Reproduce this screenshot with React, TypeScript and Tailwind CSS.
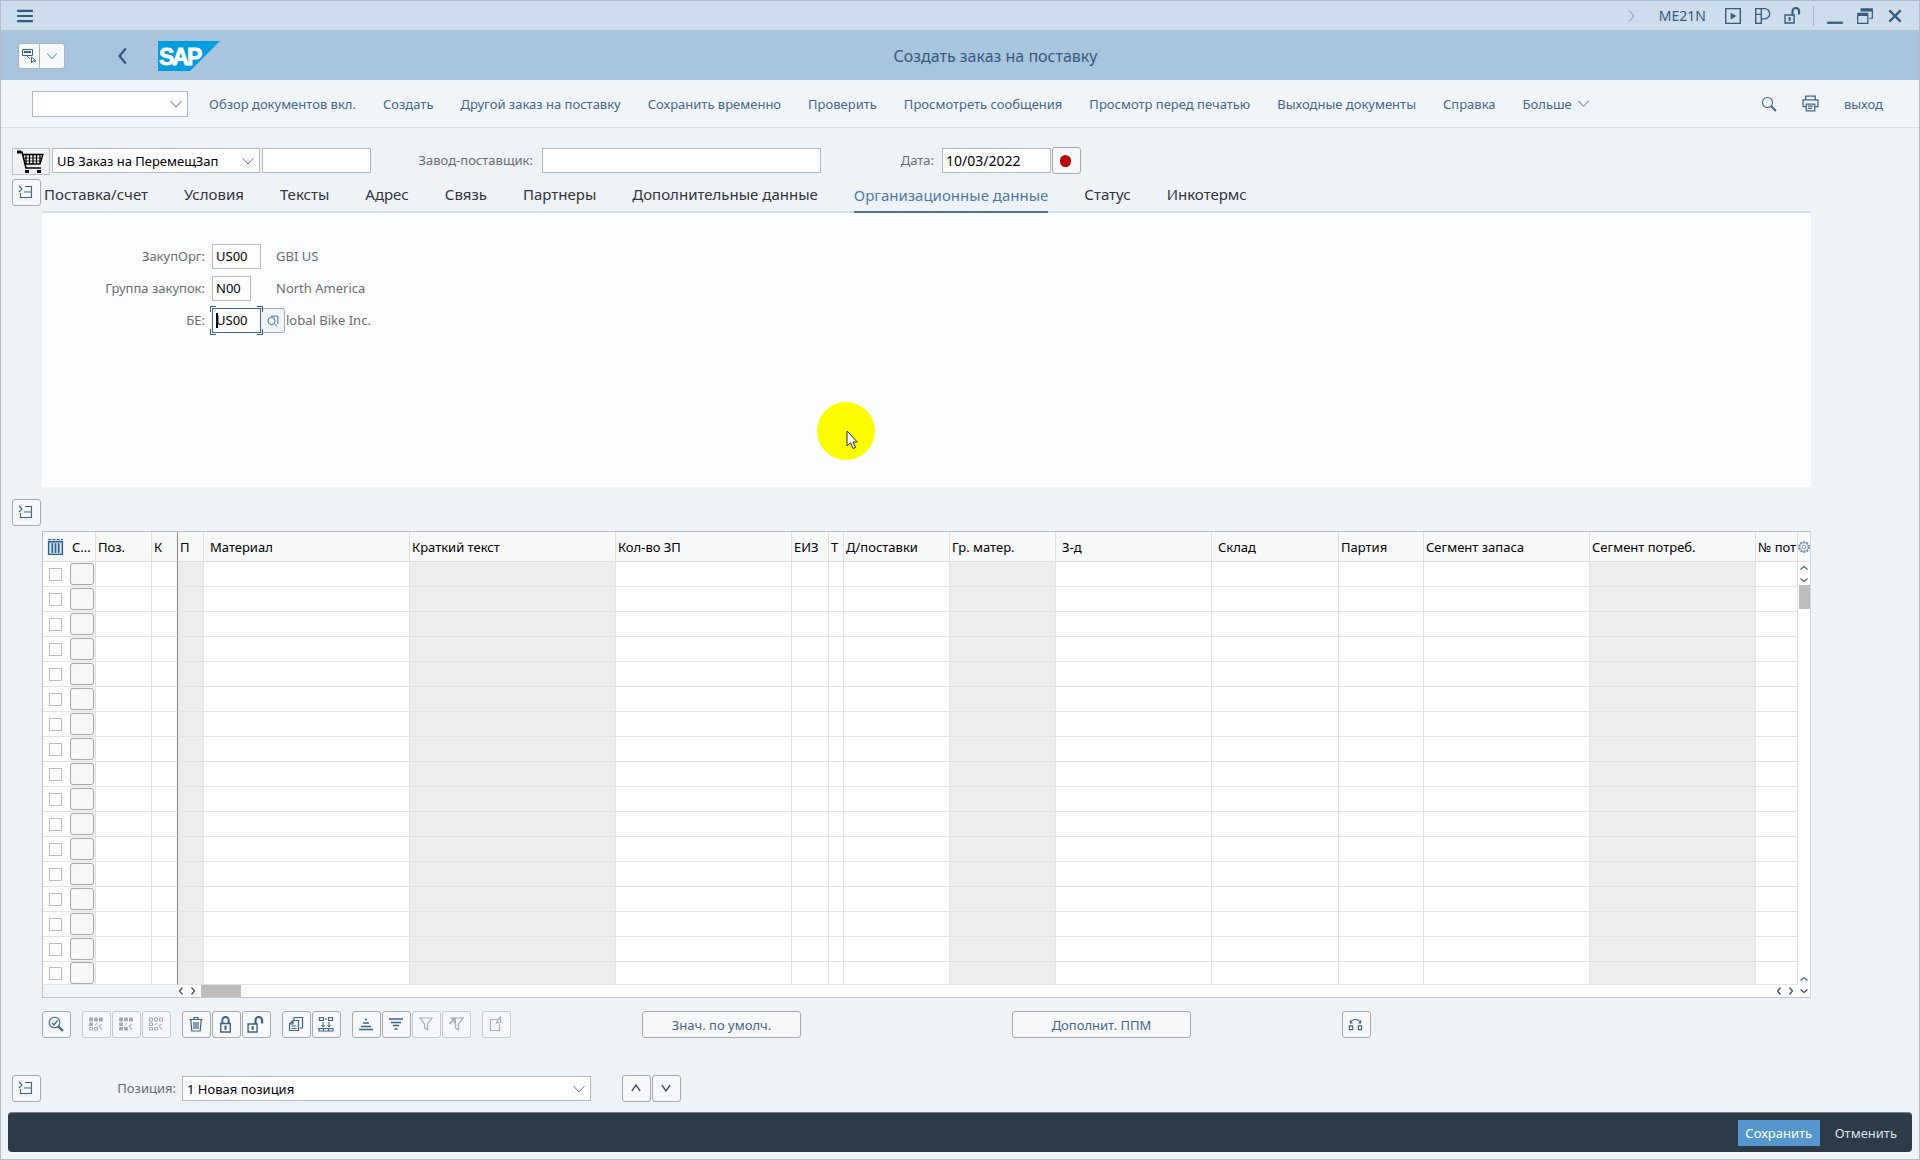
import type { ReactNode } from "react";

type IconProps = { className?: string; children: ReactNode };

function Icon({ className = "size-4", children }: IconProps) {
  return (
    <svg
      viewBox="0 0 16 16"
      className={className}
      fill="none"
      stroke="currentColor"
      strokeWidth="1"
      aria-hidden="true"
    >
      {children}
    </svg>
  );
}

function ChevronDown({ className }: { className?: string }) {
  return (
    <Icon className={className}>
      <path d="M2.500 5 8 11l5.500-6" />
    </Icon>
  );
}

function Unlock() {
  return (
    <Icon className="size-[17px]">
      <path d="M1 7.500h8.500v7.500H1z" strokeWidth="1.300" />
      <path d="M8 7.500V4a3 3 0 0 1 6.200 0v3" strokeWidth="2" />
      <path d="M5.300 9.500v3.500" strokeWidth="2" />
    </Icon>
  );
}

function CollapseIcon() {
  return (
    <Icon className="size-4">
      <path d="M7 2.500h6.500v11h-11V9M6 8h7M1 2l3 3-3 3" strokeWidth="1.100" />
    </Icon>
  );
}

function ToolButton({
  label,
  disabled = false,
  className = "text-[#3b6287]",
  children,
}: {
  label: string;
  disabled?: boolean;
  className?: string;
  children: ReactNode;
}) {
  return (
    <button
      type="button"
      aria-label={label}
      disabled={disabled}
      className={`flex h-[27px] w-[29px] shrink-0 items-center justify-center rounded-[3px] border bg-[#f6f8fa] pr-0.5 pb-px ${
        disabled ? "border-[#c4c9cd] text-[#a3abb3]" : `border-[#a6aaad] ${className}`
      }`}
    >
      {children}
    </button>
  );
}

function Select({ label, value, className }: { label: string; value: string; className: string }) {
  return (
    <div className={`relative shrink-0 ${className}`}>
      <select
        aria-label={label}
        className="block h-full w-full appearance-none border border-[#b3b8bc] bg-white pr-6 pl-1 text-[13px] leading-5 text-black"
      >
        <option>{value}</option>
      </select>
      <span className="pointer-events-none absolute inset-y-0 right-1 flex items-center text-[#5f7488]">
        <ChevronDown className="size-4" />
      </span>
    </div>
  );
}

const menu = [
  "Обзор документов вкл.",
  "Создать",
  "Другой заказ на поставку",
  "Сохранить временно",
  "Проверить",
  "Просмотреть сообщения",
  "Просмотр перед печатью",
  "Выходные документы",
  "Справка",
];

const tabs = [
  "Поставка/счет",
  "Условия",
  "Тексты",
  "Адрес",
  "Связь",
  "Партнеры",
  "Дополнительные данные",
  "Организационные данные",
  "Статус",
  "Инкотермс",
];
const activeTab = "Организационные данные";

type Column = { title: string; width: string; head?: string; cell?: string };

const columns: Column[] = [
  { title: "С...", width: "w-[26px]" },
  { title: "Поз.", width: "w-[56px]" },
  { title: "К", width: "w-[26px]", head: "border-r-[#858585]", cell: "border-r-[#858585]" },
  { title: "П", width: "w-[26px]", cell: "bg-[#ededed]" },
  { title: "Материал", width: "w-[206px]", head: "pl-[6px]" },
  { title: "Краткий текст", width: "w-[206px]", cell: "bg-[#ededed]" },
  { title: "Кол-во ЗП", width: "w-[176px]" },
  { title: "ЕИЗ", width: "w-[37px]" },
  { title: "Т", width: "w-[15px]" },
  { title: "Д/поставки", width: "w-[106px]" },
  { title: "Гр. матер.", width: "w-[106px]", cell: "bg-[#ededed]" },
  { title: "З-д", width: "w-[156px]", head: "pl-[6px]" },
  { title: "Склад", width: "w-[127px]", head: "pl-[6px]" },
  { title: "Партия", width: "w-[85px]" },
  { title: "Сегмент запаса", width: "w-[166px]" },
  { title: "Сегмент потреб.", width: "w-[166px]", cell: "bg-[#ededed]" },
  { title: "№ пот", width: "w-auto" },
];

const rows = Array.from({ length: 17 }, (_, i) => i + 1);

function TitleBar() {
  return (
    <div className="flex h-[31px] items-center border-t border-b border-t-[#a9bccb] border-b-[#b6c4d0] bg-[#cdddeb] pr-[15px] pl-[15px] text-[#335c80]">
      <button type="button" aria-label="Меню" className="flex items-center">
        <Icon className="size-[18px]">
          <path d="M1 3.500h14M1 8h14M1 12.500h14" strokeWidth="1.900" />
        </Icon>
      </button>
      <div className="ml-auto flex items-center">
        <Icon className="mr-5 size-4 text-[#6d8aa3]">
          <path d="M6 2.500 11 8l-5 5.500" />
        </Icon>
        <span className="mr-[18px] text-sm leading-5">ME21N</span>
        <button type="button" aria-label="Запуск" className="mr-3">
          <Icon className="size-[18px]">
            <path d="M1.500 1.500h13v13h-13z" strokeWidth="1.200" />
            <path d="M6 5v6l5-3z" fill="currentColor" stroke="none" />
          </Icon>
        </button>
        <button type="button" aria-label="Персонализация" className="mr-3">
          <Icon className="size-[18px]">
            <path
              d="M1.500 1.500h8a4.500 4.500 0 0 1 0 9h-3v4h-5zM1.500 6.500h5v-5M6.500 6.500v4"
              strokeWidth="1.200"
            />
          </Icon>
        </button>
        <button type="button" aria-label="Разблокировать" className="mr-3">
          <Unlock />
        </button>
        <span className="mr-3 h-5 w-px bg-[#a5b8c9]" />
        <button type="button" aria-label="Свернуть" className="mr-3">
          <Icon className="size-[18px]">
            <path d="M1 14h14" strokeWidth="2" />
          </Icon>
        </button>
        <button type="button" aria-label="Восстановить" className="mr-3">
          <Icon className="size-[18px]">
            <path d="M4 2.500h11M1 6.500h10" strokeWidth="3" />
            <path d="M1.500 8v6.500h9V8M14.500 3v7H12" strokeWidth="1.100" />
          </Icon>
        </button>
        <button type="button" aria-label="Закрыть">
          <Icon className="size-[18px]">
            <path d="m3 3 10 10M13 3 3 13" strokeWidth="2" />
          </Icon>
        </button>
      </div>
    </div>
  );
}

function Header() {
  return (
    <header className="grid h-[49px] grid-cols-[1fr_auto_1fr] items-center bg-[#a9c5de] pl-[17px]">
      <div className="flex items-center">
        <div className="flex h-[26px] overflow-hidden rounded-[3px] border border-[#a7b3bd] bg-[#f6f8fa] text-[#3b6287]">
          <button
            type="button"
            aria-label="Команды"
            className="flex w-[21px] items-center justify-center border-r border-[#a7b3bd]"
          >
            <Icon>
              <path d="M1.500 1.500h10v6h-10z" />
              <path d="M3 4h7" strokeWidth="2" />
              <path d="m6 8 3 3M10.500 9v6l1.500-2h3z" />
            </Icon>
          </button>
          <button type="button" aria-label="Ещё" className="flex w-6 items-center justify-center">
            <ChevronDown className="size-[14px]" />
          </button>
        </div>
        <button type="button" aria-label="Назад" className="ml-[47px] text-[#335c80]">
          <Icon className="size-5">
            <path d="M11 2 6 8l5 6" strokeWidth="1.900" />
          </Icon>
        </button>
        <svg viewBox="0 0 62 30" className="ml-[26px] h-[30px] w-[62px]" role="img" aria-label="SAP">
          <path d="M0 0h62L32 30H0z" fill="#009de0" />
          <text
            x="1"
            y="23.500"
            fill="#fff"
            stroke="#fff"
            strokeWidth="0.800"
            fontFamily="Liberation Sans, Arial, sans-serif"
            fontWeight="700"
            fontSize="23"
            letterSpacing="-2"
          >
            SAP
          </text>
        </svg>
      </div>
      <h1 className="pl-[54px] text-base leading-5 text-[#365a7c]">Создать заказ на поставку</h1>
    </header>
  );
}

function MenuBar() {
  return (
    <nav className="flex h-12 items-center border-b border-[#d5dde5] bg-[#f0f5f9] pr-9 pl-[31px] text-[13px] leading-5 text-[#44658a]">
      <Select label="Код транзакции" value="" className="h-[26px] w-[156px]" />
      <div className="ml-[21px] flex items-center gap-[27px] whitespace-nowrap">
        {menu.map((m) => (
          <button key={m} type="button">
            {m}
          </button>
        ))}
        <button type="button" className="flex items-center gap-1">
          Больше
          <ChevronDown className="size-[15px]" />
        </button>
      </div>
      <div className="ml-auto flex items-center">
        <button type="button" aria-label="Поиск">
          <Icon>
            <circle cx="6.500" cy="6.500" r="5" strokeWidth="1.100" />
            <path d="m10 10 5 5" strokeWidth="2" />
          </Icon>
        </button>
        <button type="button" aria-label="Печать" className="ml-[25px]">
          <Icon className="size-[17px]">
            <path
              d="M3.500 4V1h9v3M3.500 11h-2.500V4.500h14V11h-2.500M4 8.500h8V15H4zM5.500 10.500h5M5.500 12.500h4"
              strokeWidth="1.200"
            />
          </Icon>
        </button>
        <button type="button" className="ml-[25px]">
          выход
        </button>
      </div>
    </nav>
  );
}

function DocumentHeader() {
  return (
    <div className="flex h-7 items-start pl-3 text-[13px] leading-[25px] text-[#6a6d70]">
      <button
        type="button"
        aria-label="Корзина"
        className="mt-px flex h-[27px] w-[38px] items-center justify-center border border-[#bfc3c6] bg-[#f0f2f4] text-black"
      >
        <svg viewBox="0 0 28 24" className="h-6 w-7" fill="none" stroke="currentColor" aria-hidden="true">
          <path d="M1 2h4l4 16h15" strokeWidth="1.600" />
          <path d="M5 4.500h21L23 14H9" strokeWidth="1.300" />
          <path d="M9 5v9M12.500 5v9M16 5v9M19.500 5v9M23 5v8" strokeWidth="1.300" />
          <path d="M6 8h19M8 11h16" strokeWidth="0.700" />
          <path d="M0 2h4M8 21.500h4M20 21.500h4" strokeWidth="3" />
        </svg>
      </button>
      <Select label="Вид заказа" value="UB Заказ на ПеремещЗап" className="mt-px ml-0.5 h-[25px] w-[208px]" />
      <input
        aria-label="Номер заказа"
        className="mt-px ml-0.5 h-[25px] w-[109px] border border-[#b3b8bc] bg-white px-1 text-black"
      />
      <label htmlFor="supplier" className="mt-px w-[162px] text-right">
        Завод-поставщик:
      </label>
      <input
        id="supplier"
        className="mt-px ml-[9px] h-[25px] w-[279px] border border-[#b3b8bc] bg-white px-1 text-black"
      />
      <label htmlFor="doc-date" className="mt-px w-[113px] text-right">
        Дата:
      </label>
      <input
        id="doc-date"
        defaultValue="10/03/2022"
        className="mt-px ml-2 h-[25px] w-[109px] border border-[#b3b8bc] bg-white px-[3px] text-sm text-black"
      />
      <button
        type="button"
        aria-label="Статус"
        className="ml-px flex h-[27px] w-[29px] items-center justify-center rounded-[3px] border border-[#a6aaad] bg-[#f6f8fa] pr-0.5"
      >
        <span className="h-3 w-[11px] rounded-full bg-[#bb0000]" />
      </button>
    </div>
  );
}

function Tabs() {
  return (
    <div className="mt-1 flex">
      <div className="w-[41px] shrink-0 pl-3">
        <ToolButton label="Свернуть заголовок">
          <CollapseIcon />
        </ToolButton>
      </div>
      <div
        role="tablist"
        className="ml-px flex h-[34px] flex-1 gap-9 border-b-2 border-[#cfdfec] pl-0.5 text-[15px] whitespace-nowrap text-[#32363a]"
      >
        {tabs.map((t) => (
          <button
            key={t}
            type="button"
            role="tab"
            aria-selected={t === activeTab}
            className={
              t === activeTab
                ? "h-[34px] border-b-2 border-[#4a7492] leading-8 text-[#4d7ba6]"
                : "h-[30px] leading-[30px]"
            }
          >
            {t}
          </button>
        ))}
      </div>
    </div>
  );
}

const fieldClass = "h-[25px] border bg-white pl-[3px] text-[13px] text-black";

function OrgPanel() {
  return (
    <section
      aria-label={activeTab}
      className="relative ml-[42px] flex flex-col gap-[7px] bg-[#fcfdfe] pt-[31px] pb-[154px] text-[13px] leading-[25px] text-[#6a6d70]"
    >
      <div className="flex">
        <label htmlFor="porg" className="w-[163px] text-right">
          ЗакупОрг:
        </label>
        <input id="porg" defaultValue="US00" className={`ml-[7px] w-[49px] border-[#bdb8bf] ${fieldClass}`} />
        <span className="ml-[15px]">GBI US</span>
      </div>
      <div className="flex">
        <label htmlFor="pgrp" className="w-[163px] text-right">
          Группа закупок:
        </label>
        <input id="pgrp" defaultValue="N00" className={`ml-[7px] w-[39px] border-[#bdb8bf] ${fieldClass}`} />
        <span className="ml-[25px]">North America</span>
      </div>
      <div className="flex">
        <label htmlFor="company" className="w-[163px] text-right">
          БЕ:
        </label>
        <div className="relative ml-[7px] w-[49px]">
          <input id="company" defaultValue="US00" className={`w-full border-[#3d6a94] ${fieldClass}`} />
          <span className="absolute -top-0.5 -left-0.5 size-1.5 border-t border-l border-[#2f5f8a]" />
          <span className="absolute -top-0.5 -right-0.5 size-1.5 border-t border-r border-[#2f5f8a]" />
          <span className="absolute -bottom-0.5 -left-0.5 size-1.5 border-b border-l border-[#2f5f8a]" />
          <span className="absolute -right-0.5 -bottom-0.5 size-1.5 border-r border-b border-[#2f5f8a]" />
          <span className="absolute top-[5px] left-1 h-[15px] w-0.5 bg-black" />
        </div>
        <button
          type="button"
          aria-label="Средство поиска"
          className="flex h-[25px] w-6 items-center justify-center rounded-r-[3px] border border-l-0 border-[#a6aaad] bg-[#f2f6fa] text-[#3b6f9c]"
        >
          <Icon className="size-3">
            <circle cx="6" cy="8" r="4.800" strokeWidth="1.300" />
            <path d="M5 1.500h9.500V12M10 12l3.500 3.500" strokeWidth="1.300" />
          </Icon>
        </button>
        <span className="ml-px">lobal Bike Inc.</span>
      </div>
      <div className="pointer-events-none absolute top-[189px] left-[775px] size-[58px] rounded-full bg-[#fdfd02]">
        <svg viewBox="0 0 12 20" className="absolute top-7 left-[29px] h-5 w-3" aria-hidden="true">
          <path
            d="M1 1v15l3.500-3.300L7 18.500l2.500-1L7 12h4.300z"
            fill="#fff"
            stroke="#222"
            strokeWidth="1"
          />
        </svg>
      </div>
    </section>
  );
}

function ItemTable() {
  return (
    <div className="ml-[42px] border border-t-[#bfc2c5] border-r-[#cfd8e0] border-b-[#c4c7ca] border-l-[#bfc2c5] bg-white">
      <div className="flex">
        <table className="w-0 flex-1 table-fixed border-separate border-spacing-0 text-[13px] leading-5 text-black">
          <thead>
            <tr className="h-[30px]">
              <th className="w-[27px] border-b border-[#dfdfdf] bg-[#f7f8f8] p-0">
                <button type="button" aria-label="Выбрать все" className="flex pl-1 text-[#2f5f8f]">
                  <Icon className="size-[17px]">
                    <path d="M1.500 3.500h13v12h-13z" fill="#cfe0f0" strokeWidth="1.300" />
                    <path d="M5 5v9M8 5v9M11 5v9" strokeWidth="1.500" />
                    <path d="M1 1.500h14" strokeDasharray="3 1" strokeWidth="1.200" />
                  </Icon>
                </button>
              </th>
              {columns.map((c) => (
                <th
                  key={c.title}
                  scope="col"
                  className={`overflow-hidden border-r border-b border-[#dfdfdf] bg-[#f7f8f8] pr-0 text-left font-normal whitespace-nowrap ${c.width} ${c.head?.includes("pl-") ? "" : "pl-0.5"} ${c.head ?? ""}`}
                >
                  {c.title}
                </th>
              ))}
            </tr>
          </thead>
          <tbody>
            {rows.map((r) => (
              <tr key={r} className="h-[25px] last:h-[23px]">
                <td className="border-b border-[#e3e3e3] p-0">
                  <input
                    type="checkbox"
                    aria-label={`Выбрать строку ${r}`}
                    className="ml-[6px] block size-[13px] appearance-none border border-[#bcbcbc] bg-white"
                  />
                </td>
                <td className="border-r border-b border-[#e3e3e3] bg-[#f0f1f1] p-0">
                  <button
                    type="button"
                    aria-label={`Статус строки ${r}`}
                    className="block h-[22px] w-6 rounded-[3px] border border-[#a8a8a8] bg-[#f6f7f8]"
                  />
                </td>
                {columns.slice(1).map((c) => (
                  <td key={c.title} className={`border-r border-b border-[#e3e3e3] p-0 ${c.cell ?? ""}`} />
                ))}
              </tr>
            ))}
          </tbody>
        </table>
        <div className="flex w-3 flex-col text-[#4e6479]">
          <button
            type="button"
            aria-label="Настройки таблицы"
            className="flex h-[30px] w-3 items-center border-b border-[#dfdfdf] bg-[#f7f8f8] text-[#5c7f9e]"
          >
            <Icon className="size-3">
              <circle cx="8" cy="8" r="6.800" strokeDasharray="2.700 1.600" strokeWidth="1.800" />
              <circle cx="8" cy="8" r="5.500" />
              <circle cx="8" cy="8" r="2.500" />
            </Icon>
          </button>
          <button type="button" aria-label="Вверх" className="flex h-3 items-center justify-center">
            <Icon className="size-2">
              <path d="m1 11 7-6 7 6" strokeWidth="2.500" />
            </Icon>
          </button>
          <button type="button" aria-label="Вниз" className="flex h-[11px] items-center justify-center">
            <Icon className="size-2">
              <path d="m1 5 7 6 7-6" strokeWidth="2.500" />
            </Icon>
          </button>
          <span className="ml-px h-6 w-[11px] bg-[#bdbdbd]" />
          <button type="button" aria-label="Страница вверх" className="mt-auto flex h-3 items-center justify-center">
            <Icon className="size-2">
              <path d="m1 11 7-6 7 6" strokeWidth="2.500" />
            </Icon>
          </button>
        </div>
      </div>
      <div className="flex h-3 items-center text-[#3f4d5a]">
        <span className="h-3 w-[134px] bg-[#f0f5f9]" />
        <button type="button" aria-label="Влево">
          <Icon className="size-2">
            <path d="m11 1-6 7 6 7" strokeWidth="2.500" />
          </Icon>
        </button>
        <button type="button" aria-label="Вправо" className="ml-1">
          <Icon className="size-2">
            <path d="m5 1 6 7-6 7" strokeWidth="2.500" />
          </Icon>
        </button>
        <span className="ml-1 h-3 w-10 bg-[#bdbdbd]" />
        <button type="button" aria-label="Страница влево" className="ml-auto">
          <Icon className="size-2">
            <path d="m11 1-6 7 6 7" strokeWidth="2.500" />
          </Icon>
        </button>
        <button type="button" aria-label="Страница вправо" className="ml-1">
          <Icon className="size-2">
            <path d="m5 1 6 7-6 7" strokeWidth="2.500" />
          </Icon>
        </button>
        <button type="button" aria-label="Страница вниз" className="mr-0.5 ml-[5px]">
          <Icon className="size-2">
            <path d="m1 5 7 6 7-6" strokeWidth="2.500" />
          </Icon>
        </button>
      </div>
    </div>
  );
}

const gridTop = "M1.500 2h3v3h-3zM6.500 2h3v3h-3zM11.500 2h3v3h-3z";
const gridLeft = "M1.500 7h3v2.500h-3z";
const gridRest = "M1.500 11.500h3V14h-3zM6.500 11.500h3V14h-3zM7 9l2-2M11 9.500l3 4.500M14 8l-3 2";

function ItemToolbar() {
  const textButton =
    "h-[27px] rounded-[3px] border border-[#a6aaad] bg-[#f6f8fa] text-[13px] leading-5 text-[#44658a]";
  return (
    <div className="mt-[13px] flex pl-[42px]">
      <ToolButton label="Детали">
        <Icon>
          <circle cx="6.500" cy="6.500" r="5.300" strokeWidth="1.100" />
          <path d="m10.500 10.500 4.500 4.500" strokeWidth="2.200" />
          <path d="m4 7 2 2 3.500-4.500" strokeWidth="1.300" />
        </Icon>
      </ToolButton>
      <div className="ml-[11px] flex gap-px">
        <ToolButton label="Выбрать все позиции" disabled>
          <Icon>
            <path d={gridTop + gridLeft} fill="currentColor" />
            <path d={gridRest} />
          </Icon>
        </ToolButton>
        <ToolButton label="Выбрать блок" disabled>
          <Icon>
            <path d={gridTop + gridLeft} fill="currentColor" />
            <path d={gridRest} fill="currentColor" />
          </Icon>
        </ToolButton>
        <ToolButton label="Отменить выбор" disabled>
          <Icon>
            <path d={gridTop + gridLeft + gridRest} />
          </Icon>
        </ToolButton>
      </div>
      <div className="ml-[11px] flex gap-px">
        <ToolButton label="Удалить">
          <Icon>
            <path d="M1.500 3.500h13M6 3V1.500h4V3M2.800 4l1 11h8.400l1-11M6 6v7M8 6v7M10 6v7" strokeWidth="1.200" />
          </Icon>
        </ToolButton>
        <ToolButton label="Заблокировать">
          <Icon className="size-[17px]">
            <path d="M3.500 7h9v8h-9z" strokeWidth="1.300" />
            <path d="M5 7V4a3 3 0 0 1 6 0v3" strokeWidth="1.800" />
            <path d="M8 9v4" strokeWidth="2" />
          </Icon>
        </ToolButton>
        <ToolButton label="Снять блокировку">
          <Unlock />
        </ToolButton>
      </div>
      <div className="ml-[11px] flex gap-px">
        <ToolButton label="Копировать">
          <Icon>
            <path d="M6 4V1.500h8.500V12H11.500" strokeWidth="1.200" />
            <path d="M1.500 8 5 4.500h5.500v10h-9zM1.500 8H5V4.500M3.500 10h5M3.500 12.500h5" strokeWidth="1.200" />
          </Icon>
        </ToolButton>
        <ToolButton label="Дублировать">
          <Icon>
            <path d="M1.500 1.500h4v3h-4zM10.500 1.500h4v3h-4zM1 12.500h14v2.500H1zM5.500 12.500V15M10.500 12.500V15" strokeWidth="1.200" />
            <path d="M7 3h2M5 6v5M11 6v5M3.500 9 5 11l1.500-2M9.500 9l1.500 2 1.500-2" strokeWidth="1" />
          </Icon>
        </ToolButton>
      </div>
      <div className="ml-[11px] flex gap-px">
        <ToolButton label="По возрастанию">
          <Icon>
            <path d="M7 3.500h2M5 7h6M3 10.500h10M1 13.500h14" strokeWidth="1.400" />
          </Icon>
        </ToolButton>
        <ToolButton label="По убыванию">
          <Icon>
            <path d="M1 3h14M3 6.500h10M5 9.500h6M6.500 13h3" strokeWidth="1.400" />
          </Icon>
        </ToolButton>
        <ToolButton label="Фильтр" disabled>
          <Icon>
            <path d="M2 2h12L9.500 8v6l-3-2V8z" strokeWidth="1.200" />
          </Icon>
        </ToolButton>
        <ToolButton label="Удалить фильтр" disabled>
          <Icon>
            <path d="M5 2h10L10.500 8v6l-3-2V8z" strokeWidth="1.200" />
            <path d="m1.500 8 5-5.500M2.500 2.500H7V7" strokeWidth="1.600" />
          </Icon>
        </ToolButton>
      </div>
      <div className="ml-[11px] flex">
        <ToolButton label="Изменить" disabled>
          <Icon>
            <path d="M9 3.500H2.500v11h9V8M8.500 7 10 3.500 12.500 1v5L9 7z" strokeWidth="1.100" />
          </Icon>
        </ToolButton>
      </div>
      <button type="button" className={`ml-[131px] w-[159px] ${textButton}`}>
        Знач. по умолч.
      </button>
      <button type="button" className={`ml-[211px] w-[179px] ${textButton}`}>
        Дополнит. ППМ
      </button>
      <div className="ml-[151px] flex">
        <ToolButton label="Распределение">
          <Icon className="size-[15px]">
            <path d="M1.500 9.500H5v4H1.500zM11 9.500h3.500v4H11z" strokeWidth="1.200" />
            <path d="M3 6c1-4.500 9-4.500 10 0M2.500 3.500V6.500H5M13.500 3.500V6.500H11" strokeWidth="1.100" />
          </Icon>
        </ToolButton>
      </div>
    </div>
  );
}

function PositionRow() {
  return (
    <div className="mt-[37px] flex items-start pl-3 text-[13px] leading-[25px] text-[#6a6d70]">
      <ToolButton label="Свернуть детали">
        <CollapseIcon />
      </ToolButton>
      <span className="mt-px w-[135px] text-right">Позиция:</span>
      <Select label="Позиция" value="1 Новая позиция" className="mt-px ml-[6px] h-[25px] w-[409px]" />
      <div className="ml-[31px] flex gap-px">
        <ToolButton label="Предыдущая позиция" className="text-[#3f5468]">
          <Icon className="size-3">
            <path d="m2.500 12 5.500-8 5.500 8" strokeWidth="1.800" />
          </Icon>
        </ToolButton>
        <ToolButton label="Следующая позиция" className="text-[#3f5468]">
          <Icon className="size-3">
            <path d="m2.500 4 5.500 8 5.500-8" strokeWidth="1.800" />
          </Icon>
        </ToolButton>
      </div>
    </div>
  );
}

export default function App() {
  return (
    <div className="flex min-h-screen flex-col border-r border-b border-l border-[#b4bcc4] bg-[#eef3f8] font-['Noto_Sans',sans-serif]">
      <TitleBar />
      <Header />
      <MenuBar />
      <main className="mr-[108px] -ml-px pt-[19px]">
        <DocumentHeader />
        <Tabs />
        <OrgPanel />
        <div className="mt-3 mb-[5px] pl-3">
          <ToolButton label="Свернуть обзор позиций">
            <CollapseIcon />
          </ToolButton>
        </div>
        <ItemTable />
        <ItemToolbar />
        <PositionRow />
      </main>
      <footer className="mx-[7px] mt-auto mb-[7px] flex h-10 items-center justify-end rounded-[4px] border-t border-[#74828d] bg-[#2d3b47] pr-[15px] text-[13px] leading-5 text-[#d5e2ee]">
        <button type="button" className="h-[26px] w-[82px] bg-[#5496cd] text-white">
          Сохранить
        </button>
        <button type="button" className="ml-[15px]">
          Отменить
        </button>
      </footer>
    </div>
  );
}
